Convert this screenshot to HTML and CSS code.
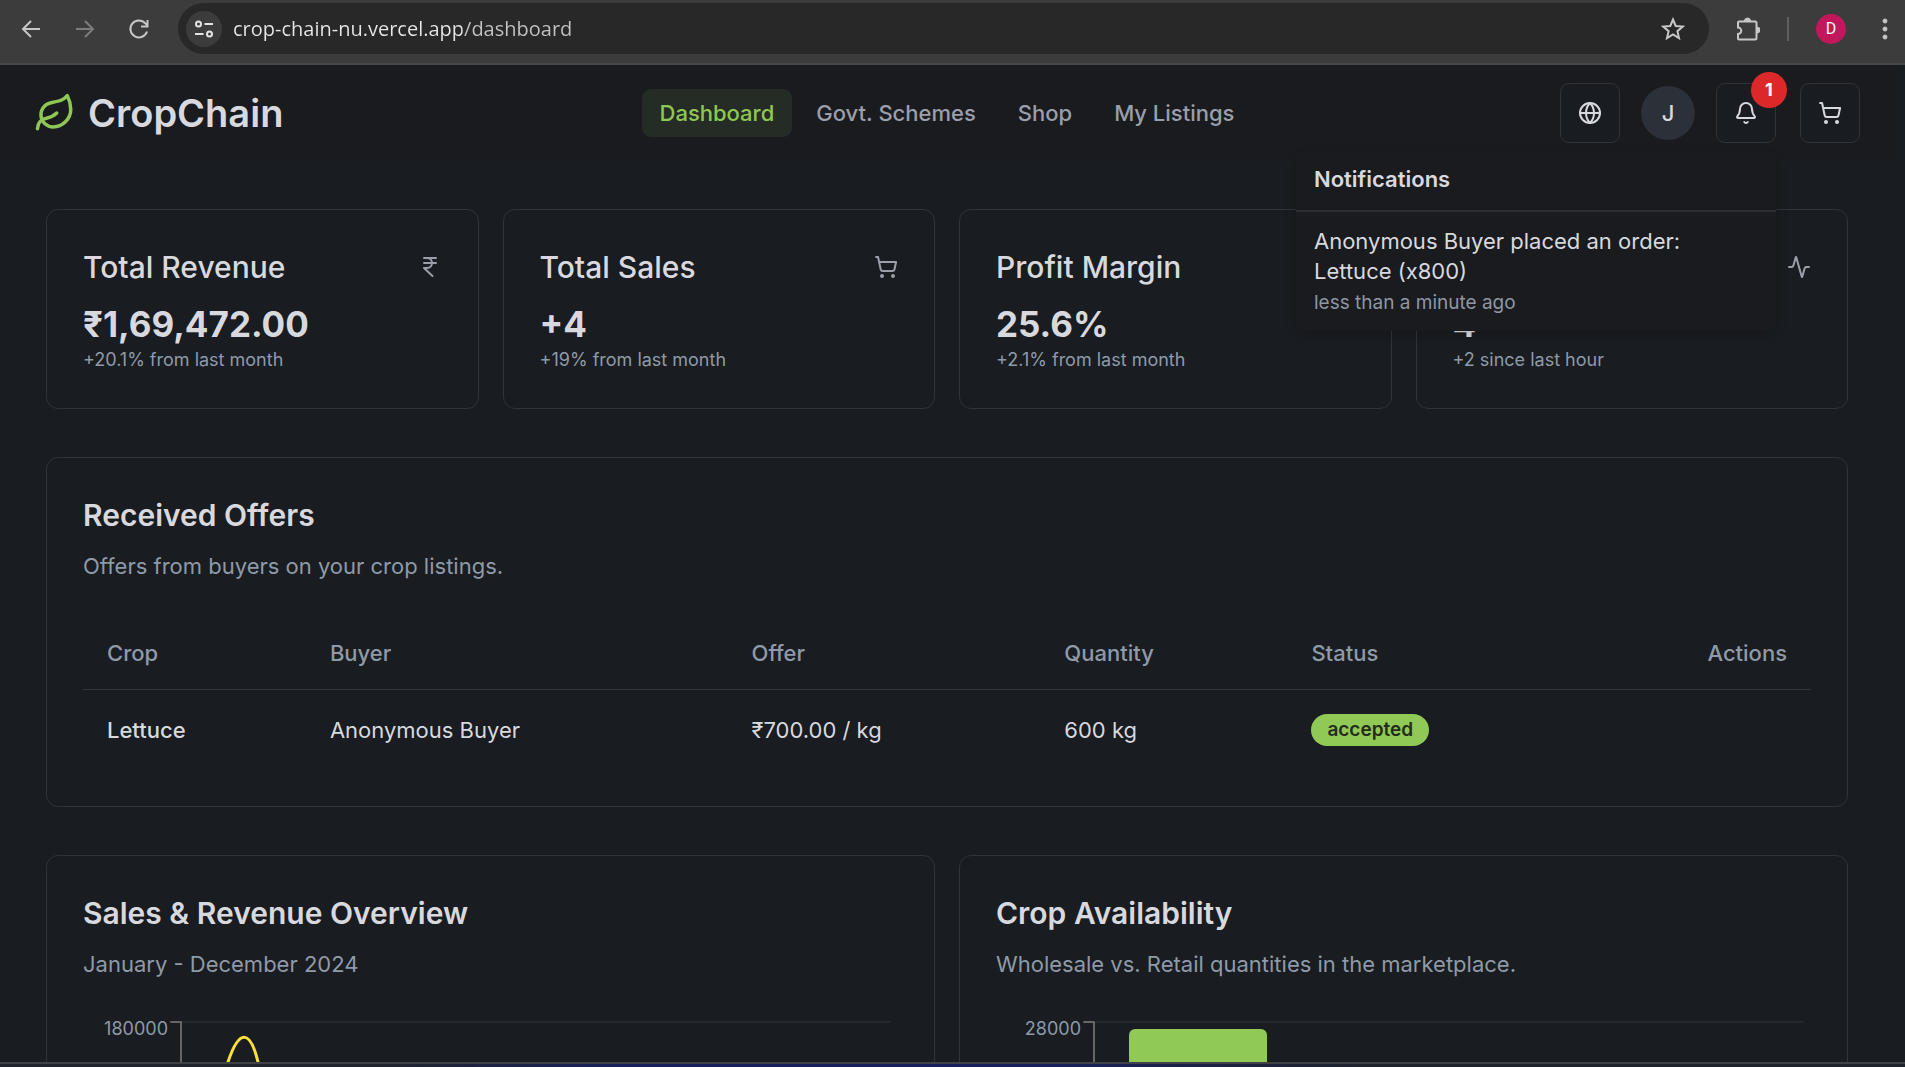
FILE: index.html
```html
<!DOCTYPE html>
<html lang="en">
<head>
    <meta charset="UTF-8">
    <meta name="viewport" content="width=device-width, initial-scale=1.0">
    <title>CropChain</title>
    <link rel="stylesheet" href="styles.css">
</head>
<body>
    <div class="toolbar">
        <div class="toolbar-nav">
            <button class="tool" aria-label="Back">
                <svg viewBox="0 0 24 24"><path d="M21 12H4M12 4l-8 8 8 8"/></svg>
            </button>
            <button class="tool dim" aria-label="Forward">
                <svg viewBox="0 0 24 24"><path d="M3 12h17M12 4l8 8-8 8"/></svg>
            </button>
            <button class="tool" aria-label="Reload">
                <svg viewBox="0 0 24 24"><path d="M20 14.5A8.5 8.5 0 1 1 18.3 6.3L20 8M20.5 3v6.5h-6.5"/></svg>
            </button>
        </div>
        <div class="address">
            <button class="site-info" aria-label="Site information">
                <svg viewBox="0 0 24 24"><circle cx="6.5" cy="7" r="2.5"/><path d="M12.5 7H21M3 17h8.5"/><circle cx="17.5" cy="17" r="2.5"/></svg>
            </button>
            <input class="url" type="text" aria-label="Address" value="crop-chain-nu.vercel.app/dashboard">
            <button class="tool" aria-label="Bookmark">
                <svg viewBox="0 0 24 24"><path d="M12 2.5l2.7 6.5 7 .6-5.3 4.6 1.6 6.9-6-3.7-6 3.7 1.6-6.9L2.3 9.6l7-.6z"/></svg>
            </button>
        </div>
        <button class="tool" aria-label="Extensions">
            <svg viewBox="0 0 24 24"><path d="M3 4.5h16a1.5 1.5 0 0 1 1.5 1.5v15a1.5 1.5 0 0 1-1.5 1.5H3a1 1 0 0 1-1-1v-4.5a3.2 3.2 0 0 0 0-6.5V5.5a1 1 0 0 1 1-1z"/><path class="solid" d="M8.5 4a3 3 0 0 1 6 0zM21 10a3 3 0 0 1 0 6z"/></svg>
        </button>
        <span class="divider"></span>
        <button class="profile" aria-label="Profile">D</button>
        <button class="tool" aria-label="Menu">
            <svg viewBox="0 0 24 24"><g class="solid"><circle cx="12" cy="4" r="2"/><circle cx="12" cy="12" r="2"/><circle cx="12" cy="20" r="2"/></g></svg>
        </button>
    </div>

    <div class="page">
        <header class="header">
            <a href="#" class="logo">
                <svg viewBox="0 0 24 24"><path d="M11 20A7 7 0 0 1 9.8 6.1C15.5 5 17 4.48 19 2c1 2 2 4.18 2 8 0 5.5-4.78 10-10 10Z"/><path d="M2 21c0-3 1.85-5.36 5.08-6C9.5 14.52 12 13 13 12"/></svg>
                <span>CropChain</span>
            </a>
            <nav class="nav">
                <a href="#" class="active">Dashboard</a>
                <a href="#">Govt. Schemes</a>
                <a href="#">Shop</a>
                <a href="#">My Listings</a>
            </nav>
            <div class="actions">
                <button class="icon-btn" aria-label="Language">
                    <svg viewBox="0 0 24 24"><circle cx="12" cy="12" r="10"/><path d="M12 2a14.5 14.5 0 0 0 0 20 14.5 14.5 0 0 0 0-20M2 12h20"/></svg>
                </button>
                <button class="avatar" aria-label="Account">J</button>
                <div class="bell">
                    <button class="icon-btn" aria-label="Notifications">
                        <svg viewBox="0 0 24 24"><path d="M10.268 21a2 2 0 0 0 3.464 0"/><path d="M3.262 15.326A1 1 0 0 0 4 17h16a1 1 0 0 0 .74-1.673C19.41 13.956 18 12.499 18 8A6 6 0 0 0 6 8c0 4.499-1.411 5.956-2.738 7.326"/></svg>
                    </button>
                    <span class="count">1</span>
                    <div class="dropdown">
                        <h2>Notifications</h2>
                        <div class="note">
                            <p>Anonymous Buyer placed an order: Lettuce (x800)</p>
                            <time>less than a minute ago</time>
                        </div>
                    </div>
                </div>
                <button class="icon-btn cart" aria-label="Cart">
                    <svg viewBox="0 0 24 24"><circle cx="8" cy="21" r="1"/><circle cx="19" cy="21" r="1"/><path d="M2.05 2.05h2l2.66 12.42a2 2 0 0 0 2 1.58h9.78a2 2 0 0 0 1.95-1.57l1.65-7.43H5.12"/></svg>
                </button>
            </div>
        </header>

        <main class="main">
            <section class="stats">
                <div class="card">
                    <div class="stat-head">
                        <h3>Total Revenue</h3>
                        <svg viewBox="0 0 24 24"><path d="M6 3h12M6 8h12M6 13l8.5 8M6 13h3M9 13c6.667 0 6.667-10 0-10"/></svg>
                    </div>
                    <div class="value">₹1,69,472.00</div>
                    <p class="change">+20.1% from last month</p>
                </div>
                <div class="card">
                    <div class="stat-head">
                        <h3>Total Sales</h3>
                        <svg viewBox="0 0 24 24"><circle cx="8" cy="21" r="1"/><circle cx="19" cy="21" r="1"/><path d="M2.05 2.05h2l2.66 12.42a2 2 0 0 0 2 1.58h9.78a2 2 0 0 0 1.95-1.57l1.65-7.43H5.12"/></svg>
                    </div>
                    <div class="value">+4</div>
                    <p class="change">+19% from last month</p>
                </div>
                <div class="card">
                    <div class="stat-head">
                        <h3>Profit Margin</h3>
                    </div>
                    <div class="value">25.6%</div>
                    <p class="change">+2.1% from last month</p>
                </div>
                <div class="card">
                    <div class="stat-head">
                        <h3></h3>
                        <svg viewBox="0 0 24 24"><path d="M22 12h-2.48a2 2 0 0 0-1.93 1.46l-2.35 8.36a.25.25 0 0 1-.48 0L9.24 2.18a.25.25 0 0 0-.48 0l-2.35 8.36A2 2 0 0 1 4.49 12H2"/></svg>
                    </div>
                    <div class="value">4</div>
                    <p class="change">+2 since last hour</p>
                </div>
            </section>

            <section class="card">
                <h2 class="title">Received Offers</h2>
                <p class="desc">Offers from buyers on your crop listings.</p>
                <table class="offers">
                    <thead>
                        <tr>
                            <th class="col-crop">Crop</th>
                            <th class="col-buyer">Buyer</th>
                            <th class="col-offer">Offer</th>
                            <th class="col-qty">Quantity</th>
                            <th>Status</th>
                            <th class="col-actions">Actions</th>
                        </tr>
                    </thead>
                    <tbody>
                        <tr>
                            <td class="crop">Lettuce</td>
                            <td>Anonymous Buyer</td>
                            <td>₹700.00 / kg</td>
                            <td>600 kg</td>
                            <td><span class="badge">accepted</span></td>
                            <td></td>
                        </tr>
                    </tbody>
                </table>
            </section>

            <section class="charts">
                <div class="card">
                    <h2 class="title">Sales &amp; Revenue Overview</h2>
                    <p class="desc">January - December 2024</p>
                    <svg class="chart" role="img" aria-label="Sales and revenue by month">
                        <line class="grid" x1="98" y1="7" x2="99%" y2="7"/>
                        <path class="axis" d="M88 7h10v380"/>
                        <text x="85" y="20">180000</text>
                        <path class="line" d="M98 380C122 330 136 74 145 47C156 14 167 14 175 47C182 80 196 330 222 380"/>
                    </svg>
                </div>
                <div class="card">
                    <h2 class="title">Crop Availability</h2>
                    <p class="desc">Wholesale vs. Retail quantities in the marketplace.</p>
                    <svg class="chart" role="img" aria-label="Wholesale and retail quantities">
                        <line class="grid" x1="98" y1="7" x2="99%" y2="7"/>
                        <path class="axis" d="M88 7h10v380"/>
                        <text x="85" y="20">28000</text>
                        <rect class="bar" x="133" y="14" width="138" height="380" rx="6"/>
                    </svg>
                </div>
            </section>
        </main>
    </div>
    <div class="taskbar"></div>
</body>
</html>
```

FILE: styles.css
```css
* {
    box-sizing: border-box;
}
body {
    margin: 0;
    height: 100vh;
    display: flex;
    flex-direction: column;
    overflow: hidden;
    background-color: #191c20;
    color: #d8d9de;
    font-family: Inter, "Open Sans", sans-serif;
    font-size: 22px;
    line-height: 30px;
}
h2, h3, p {
    margin: 0;
}
button {
    padding: 0;
    border: none;
    background: none;
    color: inherit;
    font-family: inherit;
    cursor: pointer;
}
a {
    text-decoration: none;
}
svg {
    display: block;
    width: 24px;
    height: 24px;
    flex-shrink: 0;
    fill: none;
    stroke: currentColor;
    stroke-width: 2;
    stroke-linecap: round;
    stroke-linejoin: round;
}

/* browser toolbar */
.toolbar {
    display: flex;
    align-items: center;
    gap: 27px;
    height: 65px;
    flex-shrink: 0;
    padding: 3px 8px 9px 19px;
    background-color: #3c3c3c;
    border-bottom: 2px solid #484848;
    color: #c7c7c7;
}
.toolbar svg {
    stroke-linecap: butt;
    stroke-linejoin: miter;
}
.toolbar-nav {
    display: flex;
    gap: 30px;
}
.dim {
    color: #7d7d7d;
}
.address {
    flex: 1;
    display: flex;
    align-items: center;
    height: 51px;
    padding: 0 24px 0 8px;
    border-radius: 26px;
    background-color: #282828;
}
.site-info {
    display: flex;
    align-items: center;
    justify-content: center;
    width: 36px;
    height: 36px;
    border-radius: 50%;
    background-color: #3c3c3c;
    color: #e3e3e3;
}
.url {
    flex: 1;
    padding: 0 11px;
    border: none;
    outline: none;
    font-family: "Open Sans", "Noto Sans", sans-serif;
    font-size: 20px;
    /* host is brighter than the path */
    color: transparent;
    background: linear-gradient(to right, #e8e8e8 240px, #c4c4c4 240px);
    background-clip: text;
    -webkit-background-clip: text;
}
.solid {
    fill: currentColor;
    stroke-width: 1;
}
.divider {
    width: 2px;
    height: 24px;
    background-color: #5f5f5f;
}
.profile {
    width: 30px;
    height: 30px;
    border-radius: 50%;
    background-color: #c2185b;
    color: #fff;
    font-family: Roboto, sans-serif;
    font-size: 16px;
}

/* page */
.page {
    flex: 1;
    min-height: 0;
    overflow: hidden;
    padding-right: 11px;
}
.header {
    display: grid;
    grid-template-columns: 1fr auto 1fr;
    align-items: center;
    height: 96px;
    padding: 0 34px;
    background-color: #1a1b1f;
}
.logo {
    display: flex;
    align-items: center;
    gap: 12px;
    color: #d8d9de;
    font-size: 38px;
    font-weight: 600;
}
.logo svg {
    width: 42px;
    height: 42px;
    color: #8fc755;
}
.nav {
    display: flex;
    gap: 6px;
}
.nav a {
    padding: 9px 18px;
    border-radius: 9px;
    color: #9a9faa;
    font-weight: 500;
}
.nav .active {
    background-color: #252c25;
    color: #8fc755;
}
.actions {
    display: flex;
    align-items: center;
    justify-content: flex-end;
    gap: 21px;
}
.icon-btn {
    display: flex;
    align-items: center;
    justify-content: center;
    width: 60px;
    height: 60px;
    border: 1px solid #303339;
    border-radius: 9px;
    background-color: #191c20;
}
.avatar {
    width: 54px;
    height: 54px;
    border-radius: 50%;
    background-color: #2c3038;
    font-size: 22px;
    font-weight: 500;
}
.cart {
    margin-left: 3px;
}
.bell {
    position: relative;
}
.count {
    position: absolute;
    top: -11px;
    right: -11px;
    width: 36px;
    border-radius: 50%;
    background-color: #dc2828;
    color: #fff;
    font-size: 18px;
    font-weight: 700;
    line-height: 36px;
    text-align: center;
}
.dropdown {
    position: absolute;
    top: 69px;
    right: 0;
    z-index: 10;
    width: 480px;
    border-radius: 9px;
    background-color: #191b1f;
    box-shadow: 0 4px 12px rgba(0, 0, 0, 0.15);
}
.dropdown h2 {
    padding: 12px 18px 16px;
    border-bottom: 2px solid #2a2e36;
    font-size: 22px;
    font-weight: 600;
}
.note {
    padding: 14px 18px 13px;
}
.note time {
    display: block;
    padding-top: 2px;
    color: #9096a3;
    font-size: 19px;
}

.main {
    display: flex;
    flex-direction: column;
    gap: 48px;
    padding: 48px 46px;
}
.card {
    padding: 36px;
    border: 1px solid #303339;
    border-radius: 12px;
    background-color: #191c20;
}
.stats {
    display: grid;
    grid-template-columns: repeat(4, 1fr);
    gap: 24px;
}
.stat-head {
    display: flex;
    align-items: center;
    justify-content: space-between;
    height: 42px;
    margin-bottom: 12px;
}
.stat-head h3 {
    font-size: 30px;
    font-weight: 500;
}
.stat-head svg {
    color: #9a9faa;
}
.value {
    font-size: 35px;
    font-weight: 700;
    line-height: 48px;
}
.change {
    color: #8f9aa8;
    font-size: 18px;
    line-height: 24px;
}
.title {
    font-size: 30px;
    font-weight: 600;
    line-height: 42px;
}
.desc {
    margin-top: 15px;
    margin-bottom: 36px;
    color: #8f9aa8;
}

.offers {
    width: 100%;
    border-collapse: collapse;
    table-layout: fixed;
}
.offers th {
    height: 72px;
    padding: 0 24px;
    border-bottom: 1px solid #303339;
    color: #8f9aa8;
    font-weight: 500;
    text-align: left;
}
.offers td {
    height: 81px;
    padding: 0 24px;
}
.col-crop {
    width: 12.9%;
}
.col-buyer {
    width: 24.4%;
}
.col-offer {
    width: 18.1%;
}
.col-qty {
    width: 14.3%;
}
.offers .col-actions {
    text-align: right;
}
.offers .crop {
    font-weight: 500;
}
.badge {
    display: inline-block;
    padding: 0 16px;
    border-radius: 16px;
    background-color: #91c956;
    color: #242c1c;
    font-size: 19px;
    font-weight: 600;
    line-height: 32px;
}

.charts {
    display: grid;
    grid-template-columns: 1fr 1fr;
    gap: 24px;
}
.chart {
    width: 100%;
    height: 400px;
}
.chart text {
    fill: #8f9aa8;
    stroke: none;
    font-size: 18px;
    text-anchor: end;
}
.chart .grid {
    stroke: #24272c;
}
.chart .axis {
    stroke: #666;
}
.chart .line {
    stroke: #fbdf3a;
    stroke-width: 3;
}
.chart .bar {
    fill: #91c956;
    stroke: none;
}

.taskbar {
    height: 5px;
    flex-shrink: 0;
    border-top: 2px solid #404247;
    background: linear-gradient(to right, #20242b 20%, #17205a 32%, #17205a 56%, #1f242b 72%);
}
```
